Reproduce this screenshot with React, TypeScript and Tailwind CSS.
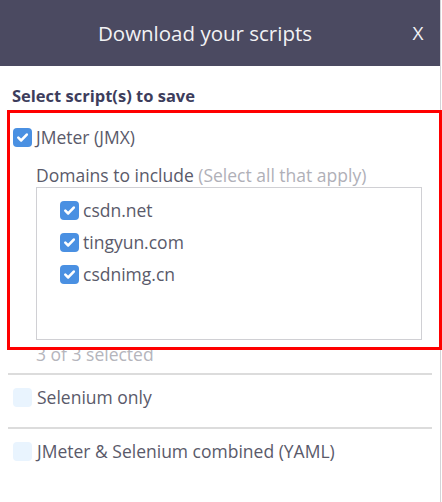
import React from "react";

type BoxProps = { checked?: boolean };

function Box({ checked = false }: BoxProps) {
  if (!checked) {
    return <span className="inline-block h-[19px] w-[19px] shrink-0 rounded-[4px] bg-[#e9f4fe]" />;
  }
  return (
    <span className="inline-flex h-[19px] w-[19px] shrink-0 items-center justify-center rounded-[4px] bg-[#4a90e2]">
      <svg width="13" height="13" viewBox="0 0 14 14" fill="none">
        <path d="M2.5 7.2 L5.6 10.2 L11.6 3.8" stroke="white" strokeWidth="2.8" strokeLinecap="round" strokeLinejoin="round" />
      </svg>
    </span>
  );
}

const domains = ["csdn.net", "tingyun.com", "csdnimg.cn"];

export default function App() {
  return (
    <div
      className="relative h-[502px] w-[442px] overflow-hidden bg-white text-[#5a5a6a]"
      style={{ fontFamily: '"Open Sans", sans-serif' }}
    >
      <div className="h-[502px] w-[441px] border-r border-[#d4d4d8]">
        {/* Header */}
        <div className="flex h-[66px] items-center bg-[#4b4a61] text-[#f2f2f4]">
          <div className="flex-1 pl-[22px] text-center text-[20.5px]">Download your scripts</div>
          <div className="w-[52px] pl-[8px] text-center text-[19px]">X</div>
        </div>

        {/* Body */}
        <div className="pt-[20px]">
          <div className="pl-[12px] text-[16.5px] font-bold leading-[20px] text-[#3d3d5c]">Select script(s) to save</div>

          <div className="mt-[20px] flex items-center gap-[4px] pl-[13px] text-[17.5px] leading-[22px]">
            <Box checked />
            <span>JMeter (JMX)</span>
          </div>

          <div className="mt-[17px] pl-[36px] text-[17.5px] leading-[20px]">
            Domains to include <span className="text-[#b0b0b8]">(Select all that apply)</span>
          </div>

          <div className="ml-[36px] mt-[2px] h-[153px] w-[386px] border border-[#d0d0d4] pt-[6px] pl-[23px]">
            {domains.map((d) => (
              <div key={d} className="flex h-[32px] items-center gap-[4px] text-[17.5px]">
                <Box checked />
                <span>{d}</span>
              </div>
            ))}
          </div>

          <div className="mt-[3px] pl-[36px] text-[17.5px] leading-[22px] text-[#b5b5bc]">3 of 3 selected</div>

          <div className="ml-[8px] mt-[8px] h-[2px] w-[424px] bg-[#dcdcdc]" />

          <div className="flex h-[52px] items-center gap-[5px] pb-[8px] pl-[13px] text-[17.5px]">
            <Box />
            <span>Selenium only</span>
          </div>

          <div className="ml-[8px] h-[2px] w-[424px] bg-[#dcdcdc]" />

          <div className="flex h-[44px] items-center gap-[5px] pl-[13px] text-[17.5px]">
            <Box />
            <span>JMeter &amp; Selenium combined (YAML)</span>
          </div>
        </div>
      </div>

      {/* annotation overlay */}
      <div className="pointer-events-none absolute left-[7px] top-[110px] h-[240px] w-[435px] border-[3px] border-[#ff0000]" />
    </div>
  );
}
